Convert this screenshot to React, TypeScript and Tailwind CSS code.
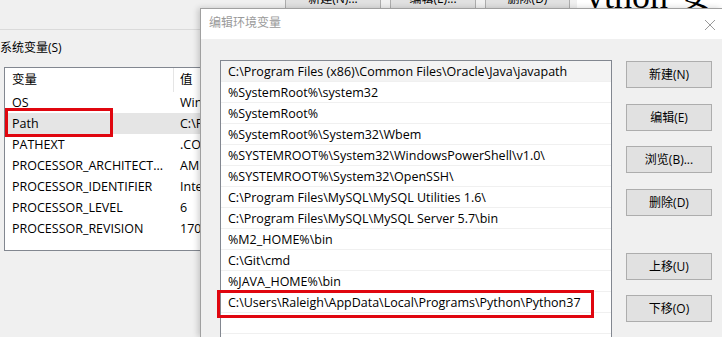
import React from 'react';

const sysVars = [
  { name: 'OS', value: 'Windows_NT' },
  { name: 'Path', value: 'C:\\Program Files (x86)\\Common Files' },
  { name: 'PATHEXT', value: '.COM;.EXE;.BAT' },
  { name: 'PROCESSOR_ARCHITECT...', value: 'AMD64' },
  { name: 'PROCESSOR_IDENTIFIER', value: 'Intel64 Family 6' },
  { name: 'PROCESSOR_LEVEL', value: '6' },
  { name: 'PROCESSOR_REVISION', value: '1709' },
];

const paths = [
  'C:\\Program Files (x86)\\Common Files\\Oracle\\Java\\javapath',
  '%SystemRoot%\\system32',
  '%SystemRoot%',
  '%SystemRoot%\\System32\\Wbem',
  '%SYSTEMROOT%\\System32\\WindowsPowerShell\\v1.0\\',
  '%SYSTEMROOT%\\System32\\OpenSSH\\',
  'C:\\Program Files\\MySQL\\MySQL Utilities 1.6\\',
  'C:\\Program Files\\MySQL\\MySQL Server 5.7\\bin',
  '%M2_HOME%\\bin',
  'C:\\Git\\cmd',
  '%JAVA_HOME%\\bin',
  'C:\\Users\\Raleigh\\AppData\\Local\\Programs\\Python\\Python37',
  '',
];

const buttons = [
  { label: '新建(N)', mt: 'mt-[1px]' },
  { label: '编辑(E)', mt: 'mt-[16px]' },
  { label: '浏览(B)...', mt: 'mt-[15px]' },
  { label: '删除(D)', mt: 'mt-[16px]' },
  { label: '上移(U)', mt: 'mt-[37px]' },
  { label: '下移(O)', mt: 'mt-[15px]' },
];

export default function App() {
  return (
    <div className="relative w-[722px] h-[337px] overflow-hidden bg-white text-[12.5px] text-black font-['Open_Sans','Noto_Sans_CJK_SC',sans-serif]">
      {/* Background window: 环境变量 */}
      <div className="w-[577px] h-full bg-[#f0f0f0] flex flex-col">
        {/* Bottom of the user variables buttons */}
        <div className="h-[30px] border-b border-[#dadada]">
          <div className="h-[9px] overflow-hidden flex items-end pl-[285px]">
            <div className="flex gap-[9px] text-[12px]">
              <div className="w-[96px] h-[22px] shrink-0 bg-[#e1e1e1] border border-[#adadad] flex items-center justify-center pt-[2px]">新建(N)...</div>
              <div className="w-[86px] h-[22px] shrink-0 bg-[#e1e1e1] border border-[#adadad] flex items-center justify-center pt-[2px]">编辑(E)...</div>
              <div className="w-[85px] h-[22px] shrink-0 bg-[#e1e1e1] border border-[#adadad] flex items-center justify-center pt-[2px]">删除(D)</div>
            </div>
          </div>
        </div>

        <div className="h-[16px] mt-[10px] leading-[16px] text-[12px]">系统变量(S)</div>

        {/* System variables list */}
        <div className="ml-[4px] mt-[11px] w-[420px] h-[184px] bg-white border border-[#828790]">
          <div className="flex h-[24px] items-center">
            <div className="w-[168px] pl-[7px] pt-[1px]">变量</div>
            <div className="w-px h-full bg-[#e5e5e5]" />
            <div className="pl-[6px] pt-[1px]">值</div>
          </div>
          {sysVars.map((v) => (
            <div
              key={v.name}
              className={`relative flex h-[21px] items-center pt-[2px] ${v.name === 'Path' ? 'bg-[#e5e5e5]' : ''}`}
            >
              <div className="w-[169px] pl-[7px] whitespace-nowrap">{v.name}</div>
              <div className="pl-[6px] whitespace-nowrap">{v.value}</div>
              {v.name === 'Path' && (
                <span className="absolute left-[0px] top-[-5px] w-[108px] h-[29px] border-[3px] border-[#e0060f]" />
              )}
            </div>
          ))}
        </div>
      </div>

      {/* Large text peeking above the dialog */}
      <div className="absolute left-[586px] top-0 h-[9px] overflow-hidden">
        <div className="mt-[-22px] text-[36px] leading-none whitespace-nowrap font-['Liberation_Serif','Noto_Serif_CJK_SC','Noto_Sans_CJK_SC',serif]">
          ython 安
        </div>
      </div>

      {/* Dialog: 编辑环境变量 */}
      <div className="absolute left-[200px] top-[8px] right-0 bottom-0 flex flex-col bg-[#f0f0f0] border-l border-t border-[#a0a0a0] shadow-[-2px_0_6px_rgba(0,0,0,0.18)]">
        <div className="h-[30px] shrink-0 bg-white flex items-center justify-between pl-[8px] pr-[6px]">
          <span className="text-[#9a9a9a] text-[12px] mt-[-2px]">编辑环境变量</span>
          <svg width="12" height="12" viewBox="0 0 12 12" className="mt-[1px]">
            <path d="M1 1L11 11M11 1L1 11" stroke="#9a9a9a" strokeWidth="1" fill="none" />
          </svg>
        </div>

        <div className="flex pl-[19px] pt-[21px]">
          <div className="w-[392px] h-[300px] shrink-0 bg-white border border-[#828790]">
            {paths.map((p, i) => (
              <div
                key={i}
                className={`relative h-[21px] flex items-center pl-[7px] pt-[2px] border-b border-[#f0f0f0] whitespace-nowrap ${i === 0 ? 'bg-[#f3f3f3]' : ''}`}
              >
                {p}
                {i === 11 && (
                  <span className="absolute left-[-4px] top-[-2px] w-[377px] h-[28px] border-[3px] border-[#e0060f]" />
                )}
              </div>
            ))}
          </div>

          <div className="ml-[14px] flex flex-col text-[12px]">
            {buttons.map((b) => (
              <div
                key={b.label}
                className={`${b.mt} w-[86px] h-[27px] bg-[#e1e1e1] border border-[#adadad] flex items-center justify-center`}
              >
                {b.label}
              </div>
            ))}
          </div>
        </div>
      </div>
    </div>
  );
}
